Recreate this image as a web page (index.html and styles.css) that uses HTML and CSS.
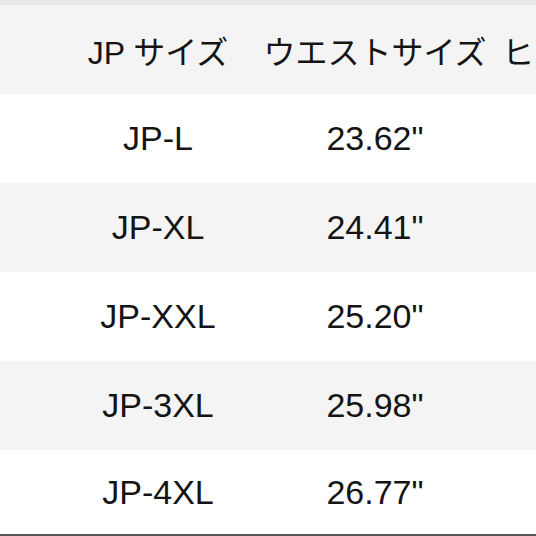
FILE: index.html
```html
<!DOCTYPE html>
<html lang="ja">
<head>
<meta charset="utf-8">
<link rel="stylesheet" href="styles.css">
</head>
<body>
<div class="page">
  <div class="topstrip"></div>
  <div class="table">
    <div class="row head">
      <div class="cell spacer"></div>
      <div class="cell c1">JP サイズ</div>
      <div class="cell c2">ウエストサイズ</div>
      <div class="cell c3">ヒップサイズ</div>
    </div>
    <div class="row">
      <div class="cell spacer"></div>
      <div class="cell c1">JP-L</div>
      <div class="cell c2">23.62"</div>
      <div class="cell c3"></div>
    </div>
    <div class="row alt">
      <div class="cell spacer"></div>
      <div class="cell c1">JP-XL</div>
      <div class="cell c2">24.41"</div>
      <div class="cell c3"></div>
    </div>
    <div class="row">
      <div class="cell spacer"></div>
      <div class="cell c1">JP-XXL</div>
      <div class="cell c2">25.20"</div>
      <div class="cell c3"></div>
    </div>
    <div class="row alt">
      <div class="cell spacer"></div>
      <div class="cell c1">JP-3XL</div>
      <div class="cell c2">25.98"</div>
      <div class="cell c3"></div>
    </div>
    <div class="row last">
      <div class="cell spacer"></div>
      <div class="cell c1">JP-4XL</div>
      <div class="cell c2">26.77"</div>
      <div class="cell c3"></div>
    </div>
  </div>
</div>
</body>
</html>
```

FILE: styles.css
```css
html, body {
  margin: 0;
  padding: 0;
  background: #ffffff;
}
.page {
  width: 536px;
  height: 536px;
  overflow: hidden;
  font-family: "Liberation Sans", "Noto Sans CJK JP", sans-serif;
  color: #141414;
}
.topstrip {
  height: 5px;
  background: #e8e8e8;
}
.table {
  display: flex;
  flex-direction: column;
  width: 760px;
}
.row {
  display: grid;
  grid-template-columns: 60px 196px 238px 266px;
  height: 89px;
  background: #ffffff;
}
.row.head,
.row.alt {
  background: #f4f4f4;
}
.row.last {
  height: 84px;
  border-bottom: 2px solid #555555;
}
.cell {
  display: flex;
  align-items: center;
  justify-content: center;
  white-space: nowrap;
  font-size: 34px;
}
.head .cell {
  font-size: 32px;
}
.cell.c3 {
  justify-content: flex-start;
  padding-left: 8px;
}
```
